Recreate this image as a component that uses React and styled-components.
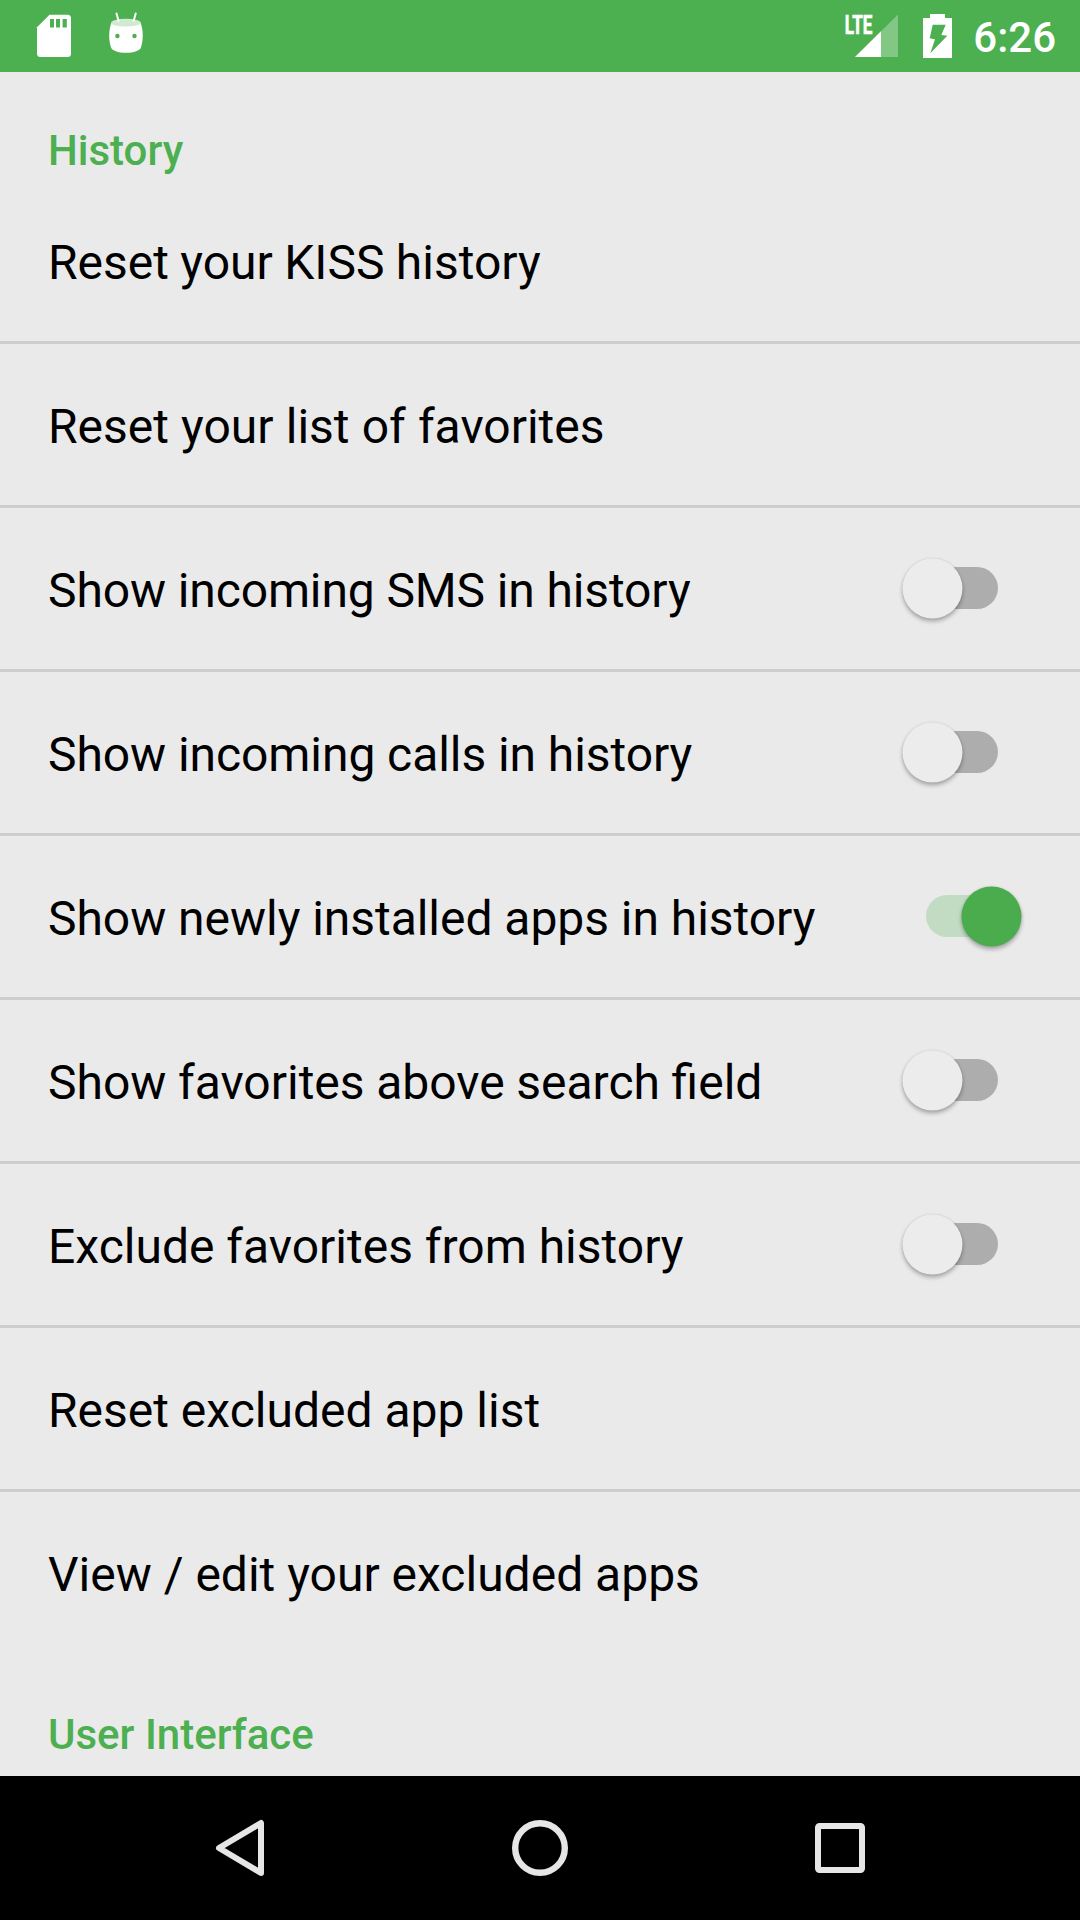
import React from "react";
import styled, { createGlobalStyle } from "styled-components";

const Global = createGlobalStyle`
  * { box-sizing: border-box; }
  body { margin: 0; background: #eaeaea; font-family: Roboto, sans-serif; }
`;
const Screen = styled.div`
  width: 1080px;
  height: 1920px;
  display: flex;
  flex-direction: column;
  background: #eaeaea;
  overflow: hidden;
`;
const StatusBar = styled.header`
  height: 72px;
  flex: none;
  padding: 0 24px 0 36px;
  background: #4caf50;
  display: flex;
  justify-content: space-between;
`;
const StatusGroup = styled.div`
  display: flex;
  height: 72px;
  gap: ${p => p.$gap}px;
`;
const Icon = styled.svg`
  display: block;
  flex: none;
`;
const NetworkLabel = styled.text`
  font-family: Roboto, sans-serif;
  font-size: 26px;
  font-weight: 700;
  fill: #fff;
  stroke: #fff;
  stroke-width: 0.7px;
`;
const Clock = styled.span`
  color: #fff;
  font-size: 42px;
  font-weight: 500;
  line-height: 75px;
`;
const List = styled.main`
  flex: 1;
  min-height: 0;
  overflow: hidden;
`;
const Heading = styled.h2`
  margin: 0;
  padding: ${p => (p.$first ? "54px" : "57px")} 0 0 48px;
  height: ${p => (p.$first ? "108px" : "120px")};
  font-size: 42px;
  font-weight: 500;
  line-height: 49px;
  color: #4caf50;
`;
const Row = styled.div`
  height: ${p => (p.$last ? "161px" : "164px")};
  padding: 0 58px 0 48px;
  display: flex;
  align-items: center;
  justify-content: space-between;
  border-bottom: ${p => (p.$last ? "0" : "3px")} solid #cdcdcd;
`;
const Label = styled.span`
  padding-top: 4px;
  font-size: 48px;
  line-height: 56px;
  color: #000;
  word-spacing: ${p => p.$gap || 0}px;
  letter-spacing: ${p => (p.$tracking ? `${p.$tracking}px` : "normal")};
`;
const Switch = styled.div`
  display: grid;
  width: 120px;
  height: 60px;
  margin-bottom: 1px;
  padding-right: 1px;
  align-items: center;
`;
const Track = styled.div`
  grid-area: 1 / 1;
  justify-self: start;
  margin-left: 24px;
  width: 72px;
  height: 42px;
  border-radius: 21px;
  background: ${p => (p.$on ? "#c2dcc3" : "#adadad")};
`;
const Thumb = styled.div`
  grid-area: 1 / 1;
  justify-self: ${p => (p.$on ? "end" : "start")};
  width: 60px;
  height: 60px;
  border-radius: 50%;
  transform: translate(0.5px, 0.5px);
  background: ${p => (p.$on ? "#4bac4e" : "#ececec")};
  box-shadow: 0 3px 4px rgba(0, 0, 0, 0.28), 0 0 3px rgba(0, 0, 0, 0.1);
`;
const NavBar = styled.nav`
  height: 144px;
  flex: none;
  padding: 0 90px;
  background: #000;
  display: grid;
  grid-template-columns: repeat(3, 1fr);
  place-items: center;
`;

const items = [
  { text: "Reset your KISS history", gap: -0.5 },
  { text: "Reset your list of favorites", gap: 0.25 },
  { text: "Show incoming SMS in history", tracking: -0.12, on: false },
  { text: "Show incoming calls in history", tracking: -0.07, on: false },
  { text: "Show newly installed apps in history", tracking: -0.04, on: true },
  { text: "Show favorites above search field", gap: -0.3, on: false },
  { text: "Exclude favorites from history", on: false },
  { text: "Reset excluded app list" },
  { text: "View / edit your excluded apps" },
];

const SdCard = () => (
  <Icon width="36" height="72" viewBox="36 0 36 72">
    <path d="M49.5 14.8H67.5Q71 14.8 71 18.3V53.5Q71 57 67.5 57H40.5Q37 57 37 53.5V27.3Z" fill="#fff" />
    <path d="M50 19h4v8.5h-4zM56 19h4v8.5h-4zM62.6 19h4.2v8.5h-4.2z" fill="#4caf50" />
  </Icon>
);
const Marshmallow = () => (
  <Icon width="36" height="72" viewBox="108 0 36 72">
    <path d="M111.5 22.5C108.5 30 108.5 41 111.3 48C112.2 50.5 118 52.8 126 52.8S139.8 50.5 140.7 48C143.5 41 143.5 30 140.5 22.5Z" fill="#fff" />
    <ellipse cx="126" cy="22.7" rx="14.8" ry="3.9" fill="#d0e9d1" />
    <path d="M116.5 13.5L118.5 20.8M135.7 13.5L133.7 20.8" stroke="#fff" strokeWidth="2" strokeLinecap="round" />
    <circle cx="117.4" cy="36" r="2.2" fill="#4caf50" />
    <circle cx="134.5" cy="36" r="2.2" fill="#4caf50" />
  </Icon>
);
const Signal = () => (
  <Icon width="56" height="72" viewBox="844 0 56 72">
    <path d="M855 57L898 14.5V57Z" fill="#fff" opacity="0.3" />
    <path d="M855 57L881 31.3V57Z" fill="#fff" />
    <NetworkLabel x="844.8" y="33.6" textLength="27.5" lengthAdjust="spacingAndGlyphs">LTE</NetworkLabel>
  </Icon>
);
const Battery = () => (
  <Icon width="48" height="72" viewBox="914 0 48 72">
    <path d="M930 14h15v4h7v40h-29V18h7z" fill="#fff" />
    <path d="M932.7 24.7H945.7L941.3 35L947.3 35.7L930.3 53.3L935 39.3L929.7 38.3Z" fill="#4caf50" />
  </Icon>
);

export default function App() {
  return (
    <Screen>
      <Global />
      <StatusBar>
        <StatusGroup $gap={36}>
          <SdCard />
          <Marshmallow />
        </StatusGroup>
        <StatusGroup $gap={11}>
          <StatusGroup $gap={14}>
            <Signal />
            <Battery />
          </StatusGroup>
          <Clock>6:26</Clock>
        </StatusGroup>
      </StatusBar>
      <List>
        <Heading $first>History</Heading>
        {items.map((item, i) => (
          <Row key={item.text} $last={i === items.length - 1}>
            <Label $gap={item.gap} $tracking={item.tracking}>{item.text}</Label>
            {item.on !== undefined && (
              <Switch>
                <Track $on={item.on} />
                <Thumb $on={item.on} />
              </Switch>
            )}
          </Row>
        ))}
        <Heading>User Interface</Heading>
      </List>
      <NavBar>
        <Icon width="60" height="60" viewBox="0 0 60 60" fill="none" stroke="#e6e6e6" strokeWidth="6" strokeLinejoin="round">
          <path d="M9 30L51 5V55Z" />
        </Icon>
        <Icon width="60" height="60" viewBox="0 0 60 60" fill="none" stroke="#e6e6e6" strokeWidth="6.4">
          <circle cx="30" cy="30" r="24.8" />
        </Icon>
        <Icon width="60" height="60" viewBox="0 0 60 60" fill="none" stroke="#e6e6e6" strokeWidth="6" strokeLinejoin="round">
          <rect x="8" y="8" width="44" height="44" rx="1.5" />
        </Icon>
      </NavBar>
    </Screen>
  );
}
